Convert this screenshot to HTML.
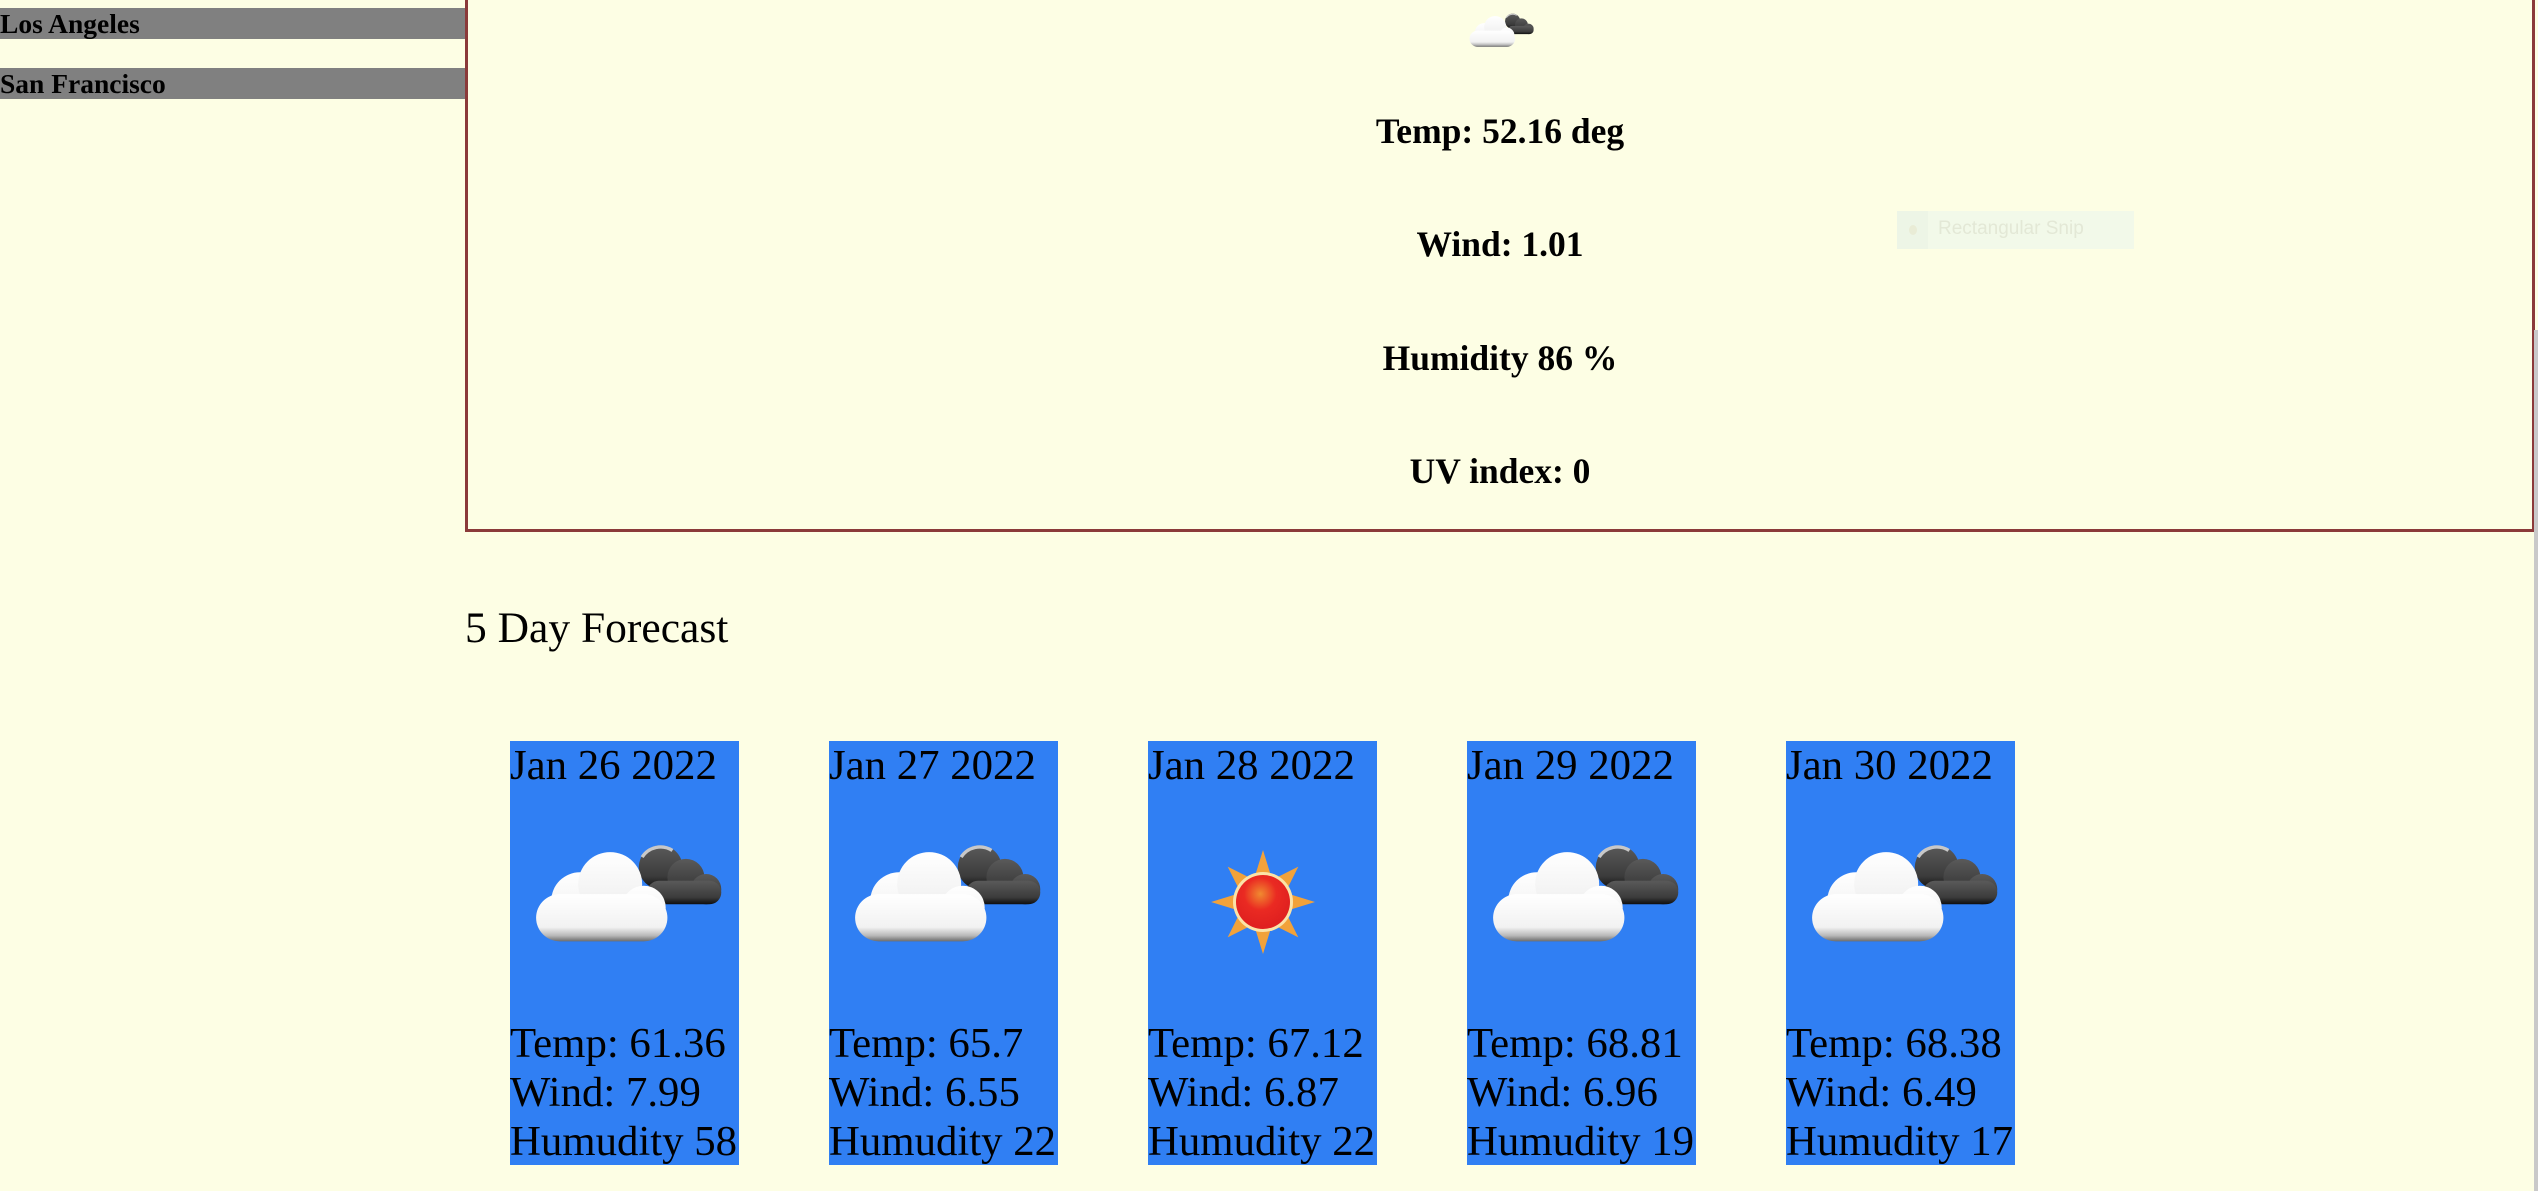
<!DOCTYPE html>
<html><head><meta charset="utf-8">
<style>
html,body{margin:0;padding:0;}
body{width:2538px;height:1191px;background:#fdfee4;position:relative;overflow:hidden;font-family:"Liberation Serif",serif;color:#000;}
.city{position:absolute;left:0;width:465px;height:31px;background:#808080;font-weight:bold;font-size:27.5px;line-height:31px;}
.main{position:absolute;left:465px;top:-5px;width:2064px;height:531px;border:3px solid #8b3a3a;box-sizing:content-box;}
.mt{position:absolute;left:465px;width:2070px;text-align:center;font-weight:bold;font-size:35.5px;line-height:40px;}
.card{position:absolute;top:741px;width:229px;height:424px;background:#307ff3;font-size:42.8px;line-height:49px;white-space:nowrap;}
.card .d{position:absolute;left:0;top:0;}
.card svg{position:absolute;}
</style></head><body>
<svg width="0" height="0" style="position:absolute">
<defs>
<linearGradient id="wg" x1="0" y1="0" x2="0" y2="1"><stop offset="0" stop-color="#ffffff"/><stop offset="0.7" stop-color="#f2f2f2"/><stop offset="0.88" stop-color="#b8b8b8"/><stop offset="1" stop-color="#6d6d6d"/></linearGradient>
<linearGradient id="dg" x1="0" y1="0" x2="0" y2="1"><stop offset="0" stop-color="#5a5a5a"/><stop offset="0.7" stop-color="#3c3c3c"/><stop offset="1" stop-color="#0e0e0e"/></linearGradient>
<radialGradient id="sg" cx="0.45" cy="0.35" r="0.6"><stop offset="0" stop-color="#f08a30"/><stop offset="0.5" stop-color="#ea2a22"/><stop offset="1" stop-color="#e02020"/></radialGradient>
<g id="cloud">
<g fill="url(#dg)">
<circle cx="80" cy="20" r="13"/><circle cx="95" cy="26" r="11"/><circle cx="107" cy="33" r="9"/>
<rect x="72" y="28" width="44" height="14" rx="7"/>
</g>
<path d="M69 14 a13 13 0 0 1 18 -4" stroke="#c8c8c8" stroke-width="2" fill="none"/>
<g fill="url(#wg)">
<circle cx="32" cy="40" r="17"/><circle cx="50" cy="30" r="19"/><circle cx="70" cy="44" r="13"/>
<rect x="6" y="36" width="78" height="28" rx="14"/>
</g>
</g>
</defs>
</svg>

<div class="city" style="top:8px">Los Angeles</div>
<div class="city" style="top:68px">San Francisco</div>

<div class="main"></div>
<svg style="position:absolute;left:1466px;top:9px" width="70" height="42" viewBox="0 0 120 70"><use href="#cloud"/></svg>
<div class="mt" style="top:111px">Temp: 52.16 deg</div>
<div class="mt" style="top:224px">Wind: 1.01</div>
<div class="mt" style="top:338px">Humidity 86 %</div>
<div class="mt" style="top:451px">UV index: 0</div>

<div style="position:absolute;left:1897px;top:211px;width:237px;height:38px;background:#f2f9e9;"></div>
<div style="position:absolute;left:1897px;top:211px;width:31px;height:38px;background:#edf5e6;"></div>
<div style="position:absolute;left:1909px;top:225px;width:8px;height:10px;border-radius:50%;background:#e9ecd6;"></div>
<div style="position:absolute;left:1938px;top:214px;font-family:'Liberation Sans',sans-serif;font-size:19px;line-height:30px;color:#e3e8d6;">Rectangular Snip</div>
<div style="position:absolute;left:2534px;top:330px;width:4px;height:861px;background:#c9c9c9;"></div>

<div style="position:absolute;left:465px;top:603px;font-size:43.5px;line-height:50px;">5 Day Forecast</div>

<div class="card" style="left:510px"><div class="d">Jan 26 2022</div>
<svg style="left:16px;top:92px" width="202" height="119" viewBox="0 0 120 70"><use href="#cloud"/></svg>
<div style="position:absolute;top:278px;left:0">Temp: 61.36<br>Wind: 7.99<br>Humudity 58</div></div>

<div class="card" style="left:829px"><div class="d">Jan 27 2022</div>
<svg style="left:16px;top:92px" width="202" height="119" viewBox="0 0 120 70"><use href="#cloud"/></svg>
<div style="position:absolute;top:278px;left:0">Temp: 65.7<br>Wind: 6.55<br>Humudity 22</div></div>

<div class="card" style="left:1148px"><div class="d">Jan 28 2022</div>
<svg style="left:60px;top:106px" width="110" height="110" viewBox="-55 -55 110 110">
<g fill="#f2a23a">
<polygon points="0,-52 8,-26 -8,-26"/><polygon points="0,52 8,26 -8,26"/>
<polygon points="-52,0 -26,8 -26,-8"/><polygon points="52,0 26,8 26,-8"/>
<g transform="rotate(45)"><polygon points="0,-50 8,-26 -8,-26"/><polygon points="0,50 8,26 -8,26"/><polygon points="-50,0 -26,8 -26,-8"/><polygon points="50,0 26,8 26,-8"/></g>
</g>
<circle r="30" fill="#fbe3a8"/>
<circle r="27" fill="url(#sg)"/>
</svg>
<div style="position:absolute;top:278px;left:0">Temp: 67.12<br>Wind: 6.87<br>Humudity 22</div></div>

<div class="card" style="left:1467px"><div class="d">Jan 29 2022</div>
<svg style="left:16px;top:92px" width="202" height="119" viewBox="0 0 120 70"><use href="#cloud"/></svg>
<div style="position:absolute;top:278px;left:0">Temp: 68.81<br>Wind: 6.96<br>Humudity 19</div></div>

<div class="card" style="left:1786px"><div class="d">Jan 30 2022</div>
<svg style="left:16px;top:92px" width="202" height="119" viewBox="0 0 120 70"><use href="#cloud"/></svg>
<div style="position:absolute;top:278px;left:0">Temp: 68.38<br>Wind: 6.49<br>Humudity 17</div></div>

</body></html>
